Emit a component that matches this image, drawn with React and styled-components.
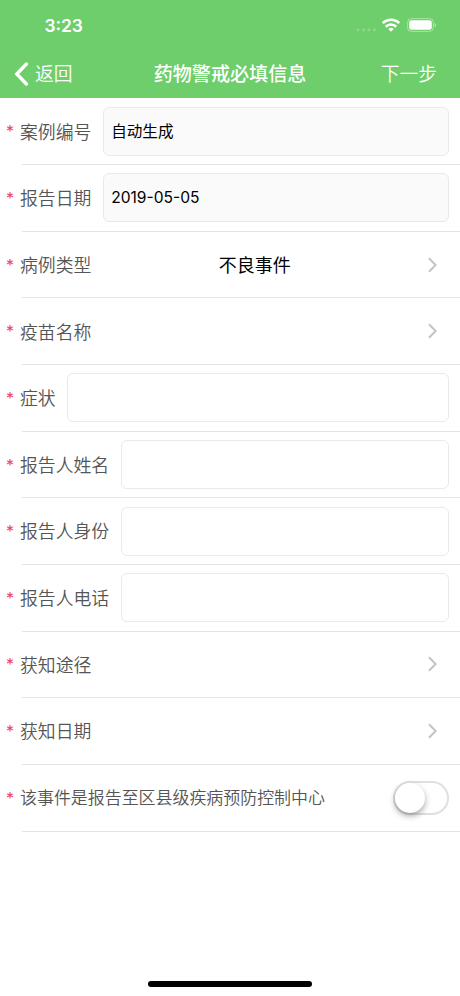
import React, { useState } from "react";
import styled, { createGlobalStyle } from "styled-components";

const GlobalStyle = createGlobalStyle`
  * { box-sizing: border-box; }
  body {
    margin: 0;
    background: #fff;
    font-family: Inter, "Noto Sans CJK SC", sans-serif;
  }
`;

const Screen = styled.div`
  width: 460px;
  height: 996px;
  display: flex;
  flex-direction: column;
  overflow: hidden;
  background: #fff;
`;

const Header = styled.header`
  height: 98px;
  flex: none;
  background: #6dce6b;
  color: #fff;
`;

const StatusBar = styled.div`
  height: 50px;
  display: flex;
  align-items: center;
  justify-content: space-between;
  padding: 1px 23px 0 44.4px;
`;

const Clock = styled.span`
  font-size: 17.4px;
  font-weight: 600;
  line-height: 24px;
`;

const StatusIcons = styled.div`
  display: flex;
  align-items: center;
  padding-bottom: 1px;
`;

const NavBar = styled.nav`
  height: 48px;
  display: grid;
  grid-template-columns: 110px 1fr 110px;
  align-items: center;
  padding: 0 23px 0 14px;
`;

const NavButton = styled.button`
  display: flex;
  align-items: center;
  justify-content: ${(p) => (p.$end ? "flex-end" : "flex-start")};
  gap: 6px;
  padding: 0;
  border: 0;
  background: none;
  color: inherit;
  font: 350 18.8px/28px "Noto Sans CJK SC", sans-serif;
  white-space: nowrap;
`;

const NavText = styled.span`
  padding-bottom: 2px;
`;

const Title = styled.h1`
  margin: 0 0 0 9px;
  padding-bottom: 2px;
  text-align: center;
  font: 500 19.1px/28px "Noto Sans CJK SC", sans-serif;
  white-space: nowrap;
`;

const Form = styled.main`
  display: flex;
  flex-direction: column;
  padding-top: 0.3px;
`;

const Row = styled.div`
  height: 66.67px;
  display: flex;
  align-items: center;
  padding: 0 11px 0.8px 6px;
  background: linear-gradient(#e4e4e4, #e4e4e4) 22px 100% / 100% 1px no-repeat;
`;

const Star = styled.span`
  width: 14px;
  flex: none;
  padding: 0;
  color: #f0435e;
  font: 400 16px/24px Inter, sans-serif;
`;

const Label = styled.label`
  flex: none;
  padding: 0 0.3px 1.4px 0;
  color: #555;
  font: 350 ${(p) => (p.$long ? "16.95px" : "17.85px")}/26px "Noto Sans CJK SC", sans-serif;
  white-space: nowrap;
`;

const Input = styled.input`
  flex: 1;
  min-width: 0;
  height: 49px;
  margin-left: 11.5px;
  padding: ${(p) => (p.$latin ? "0 7px 0" : "0 7px 2px")};
  border: 1px solid #eaeaea;
  border-radius: 6px;
  outline: 0;
  background: ${(p) => (p.readOnly ? "#fafafa" : "#fff")};
  color: #000;
  font: 400 15.6px/24px Inter, "Noto Sans CJK SC", sans-serif;
`;

const Value = styled.span`
  flex: 1;
  padding: 0 0 1px 127px;
  color: #000;
  font: 400 18px/26px "Noto Sans CJK SC", sans-serif;
`;

const Arrow = styled.svg`
  flex: none;
  margin-right: 11px;
`;

const Switch = styled.button`
  display: flex;
  justify-content: ${(p) => (p.$on ? "flex-end" : "flex-start")};
  width: 56px;
  height: 34px;
  margin-left: auto;
  padding: 0;
  border: 2px solid #e0e0e0;
  border-radius: 17px;
  background: ${(p) => (p.$on ? "#6dce6b" : "#fff")};
`;

const Knob = styled.span`
  width: 30px;
  height: 30px;
  border-radius: 50%;
  background: #fff;
  box-shadow: 0 3px 6px rgba(0, 0, 0, 0.35);
`;

const HomeIndicator = styled.div`
  width: 164px;
  height: 6px;
  margin: auto auto 9px 148px;
  border-radius: 3px;
  background: #000;
`;

const fields = [
  { label: "案例编号", type: "input", value: "自动生成", locked: true },
  { label: "报告日期", type: "input", value: "2019-05-05", locked: true, latin: true },
  { label: "病例类型", type: "picker", value: "不良事件" },
  { label: "疫苗名称", type: "picker" },
  { label: "症状", type: "input" },
  { label: "报告人姓名", type: "input" },
  { label: "报告人身份", type: "input" },
  { label: "报告人电话", type: "input" },
  { label: "获知途径", type: "picker" },
  { label: "获知日期", type: "picker" },
  { label: "该事件是报告至区县级疾病预防控制中心", type: "switch" },
];

const Signal = styled.svg`
  margin-right: 4px;
`;

const Wifi = styled.svg`
  margin-right: 6px;
`;

function SignalIcon() {
  return (
    <Signal width="22" height="20" viewBox="0 0 22 20" fill="#fff" opacity=".22">
      {[3, 8.5, 14, 19.5].map((x) => (
        <circle key={x} cx={x} cy="14.8" r="1.5" />
      ))}
    </Signal>
  );
}

function WifiIcon() {
  return (
    <Wifi width="20" height="20" viewBox="0 0 20 20" fill="none" stroke="#fff" strokeWidth="2.6">
      <path d="M1.7 8.1a12 12 0 0 1 16.6 0" />
      <path d="M4.7 11.7a7.6 7.6 0 0 1 10.6 0" />
      <path d="M7.3 14a3.9 3.9 0 0 1 5.4 0L10 16.8z" fill="#fff" stroke="none" />
    </Wifi>
  );
}

function BatteryIcon() {
  return (
    <svg width="30" height="14" viewBox="0 0 30 14">
      <rect x=".6" y=".6" width="25.8" height="12.8" rx="3.8" fill="none" stroke="#fff" strokeOpacity=".42" />
      <rect x="2.2" y="2.2" width="22.6" height="9.6" rx="2.3" fill="#fff" />
      <path d="M27.7 5v4.2q1.4-.6 1.4-2.1t-1.4-2.1" fill="#fff" opacity=".5" />
    </svg>
  );
}

function SwitchControl() {
  const [on, setOn] = useState(false);
  return (
    <Switch type="button" role="switch" aria-checked={on} $on={on} onClick={() => setOn(!on)}>
      <Knob />
    </Switch>
  );
}

function Field({ label, type, value = "", locked, latin }) {
  return (
    <Row>
      <Star>*</Star>
      <Label $long={type === "switch"}>{label}</Label>
      {type === "input" && <Input defaultValue={value} readOnly={locked} $latin={latin} />}
      {type === "picker" && (
        <>
          <Value>{value}</Value>
          <Arrow width="11" height="16" viewBox="0 0 11 16" fill="none" stroke="#c4c4c4" strokeWidth="2">
            <path d="M2 1.2 8.6 8 2 14.8" />
          </Arrow>
        </>
      )}
      {type === "switch" && <SwitchControl />}
    </Row>
  );
}

export default function App() {
  return (
    <Screen>
      <GlobalStyle />
      <Header>
        <StatusBar>
          <Clock>3:23</Clock>
          <StatusIcons>
            <SignalIcon />
            <WifiIcon />
            <BatteryIcon />
          </StatusIcons>
        </StatusBar>
        <NavBar>
          <NavButton type="button">
            <svg width="15" height="24" viewBox="0 0 15 24" fill="none" stroke="#fff" strokeWidth="3.4" strokeLinecap="round" strokeLinejoin="miter">
              <path d="M12.4 2 2.8 12l9.6 10" />
            </svg>
            <NavText>返回</NavText>
          </NavButton>
          <Title>药物警戒必填信息</Title>
          <NavButton type="button" $end>
            <NavText>下一步</NavText>
          </NavButton>
        </NavBar>
      </Header>
      <Form>
        {fields.map((f) => (
          <Field key={f.label} {...f} />
        ))}
      </Form>
      <HomeIndicator />
    </Screen>
  );
}
